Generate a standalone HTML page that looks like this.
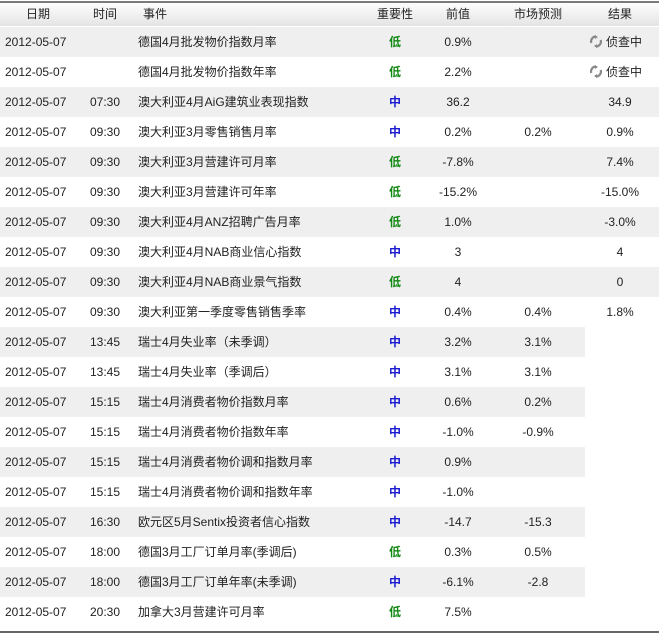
<!DOCTYPE html>
<html><head><meta charset="utf-8"><style>
*{margin:0;padding:0;box-sizing:border-box}
body{width:659px;height:635px;background:#fff;position:relative;overflow:hidden;font-family:"Liberation Sans","Noto Sans CJK SC",sans-serif;font-size:12px;color:#222}
.hd{position:absolute;left:0;top:1px;width:659px;height:25px;border-top:2px solid #7a7a7a;background:linear-gradient(#fdfdfd,#e4e4e4)}
.r{position:absolute;left:0;width:659px;height:30px}
.g{background:#efefef}
.s{width:585px}
.c{position:absolute;top:0;line-height:30px;white-space:nowrap}
.hd .c{line-height:23px}
.ctr{transform:translateX(-50%)}
.lo{color:#118811;font-weight:bold}
.mid{color:#1a1ad0;font-weight:bold}
.bot{position:absolute;left:0;top:631px;width:659px;height:2px;background:#666}
.ic{display:inline-block;vertical-align:-2px;margin-right:4px}
</style></head><body>
<div class="hd">
<span class="c ctr" style="left:38px">日期</span>
<span class="c ctr" style="left:105px">时间</span>
<span class="c" style="left:143px">事件</span>
<span class="c ctr" style="left:395px">重要性</span>
<span class="c ctr" style="left:458px">前值</span>
<span class="c ctr" style="left:538px">市场预测</span>
<span class="c ctr" style="left:620px">结果</span>
</div>
<div id="rows"></div>
<div class="bot"></div>
<script>
var d=[
["","德国4月批发物价指数月率","l","0.9%","","*"],
["","德国4月批发物价指数年率","l","2.2%","","*"],
["07:30","澳大利亚4月AiG建筑业表现指数","m","36.2","","34.9"],
["09:30","澳大利亚3月零售销售月率","m","0.2%","0.2%","0.9%"],
["09:30","澳大利亚3月营建许可月率","l","-7.8%","","7.4%"],
["09:30","澳大利亚3月营建许可年率","l","-15.2%","","-15.0%"],
["09:30","澳大利亚4月ANZ招聘广告月率","l","1.0%","","-3.0%"],
["09:30","澳大利亚4月NAB商业信心指数","m","3","","4"],
["09:30","澳大利亚4月NAB商业景气指数","l","4","","0"],
["09:30","澳大利亚第一季度零售销售季率","m","0.4%","0.4%","1.8%"],
["13:45","瑞士4月失业率（未季调）","m","3.2%","3.1%",null],
["13:45","瑞士4月失业率（季调后）","m","3.1%","3.1%",null],
["15:15","瑞士4月消费者物价指数月率","m","0.6%","0.2%",null],
["15:15","瑞士4月消费者物价指数年率","m","-1.0%","-0.9%",null],
["15:15","瑞士4月消费者物价调和指数月率","m","0.9%","",null],
["15:15","瑞士4月消费者物价调和指数年率","m","-1.0%","",null],
["16:30","欧元区5月Sentix投资者信心指数","m","-14.7","-15.3",null],
["18:00","德国3月工厂订单月率(季调后)","l","0.3%","0.5%",null],
["18:00","德国3月工厂订单年率(未季调)","m","-6.1%","-2.8",null],
["20:30","加拿大3月营建许可月率","l","7.5%","",null]];
var icon='<svg class="ic" width="12" height="13" viewBox="0 0 12 13"><path d="M6 1.5A5 5 0 0 0 1.3 8" stroke="#888" stroke-width="2.2" fill="none"/><path d="M6 11.5A5 5 0 0 0 10.7 5" stroke="#888" stroke-width="2.2" fill="none"/><path d="M5 0L8 2 5 4z M7 9L4 11 7 13z" fill="#888"/></svg>';
var h='';
d.forEach(function(r,i){
var top=27+30*i;
var cls='r'+(i%2==0?' g':'')+(r[5]===null?' s':'');
h+='<div class="'+cls+'" style="top:'+top+'px">'+
'<span class="c" style="left:5px">2012-05-07</span>'+
'<span class="c" style="left:90px">'+r[0]+'</span>'+
'<span class="c" style="left:138px">'+r[1]+'</span>'+
'<span class="c ctr '+(r[2]=='l'?'lo':'mid')+'" style="left:395px">'+(r[2]=='l'?'低':'中')+'</span>'+
'<span class="c ctr" style="left:458px">'+r[3]+'</span>'+
'<span class="c ctr" style="left:538px">'+r[4]+'</span>'+
(r[5]==='*'?'<span class="c ctr" style="left:616px">'+icon+'侦查中</span>':(r[5]?'<span class="c ctr" style="left:620px">'+r[5]+'</span>':''))+
'</div>';});
document.getElementById('rows').innerHTML=h;
</script>
</body></html>
